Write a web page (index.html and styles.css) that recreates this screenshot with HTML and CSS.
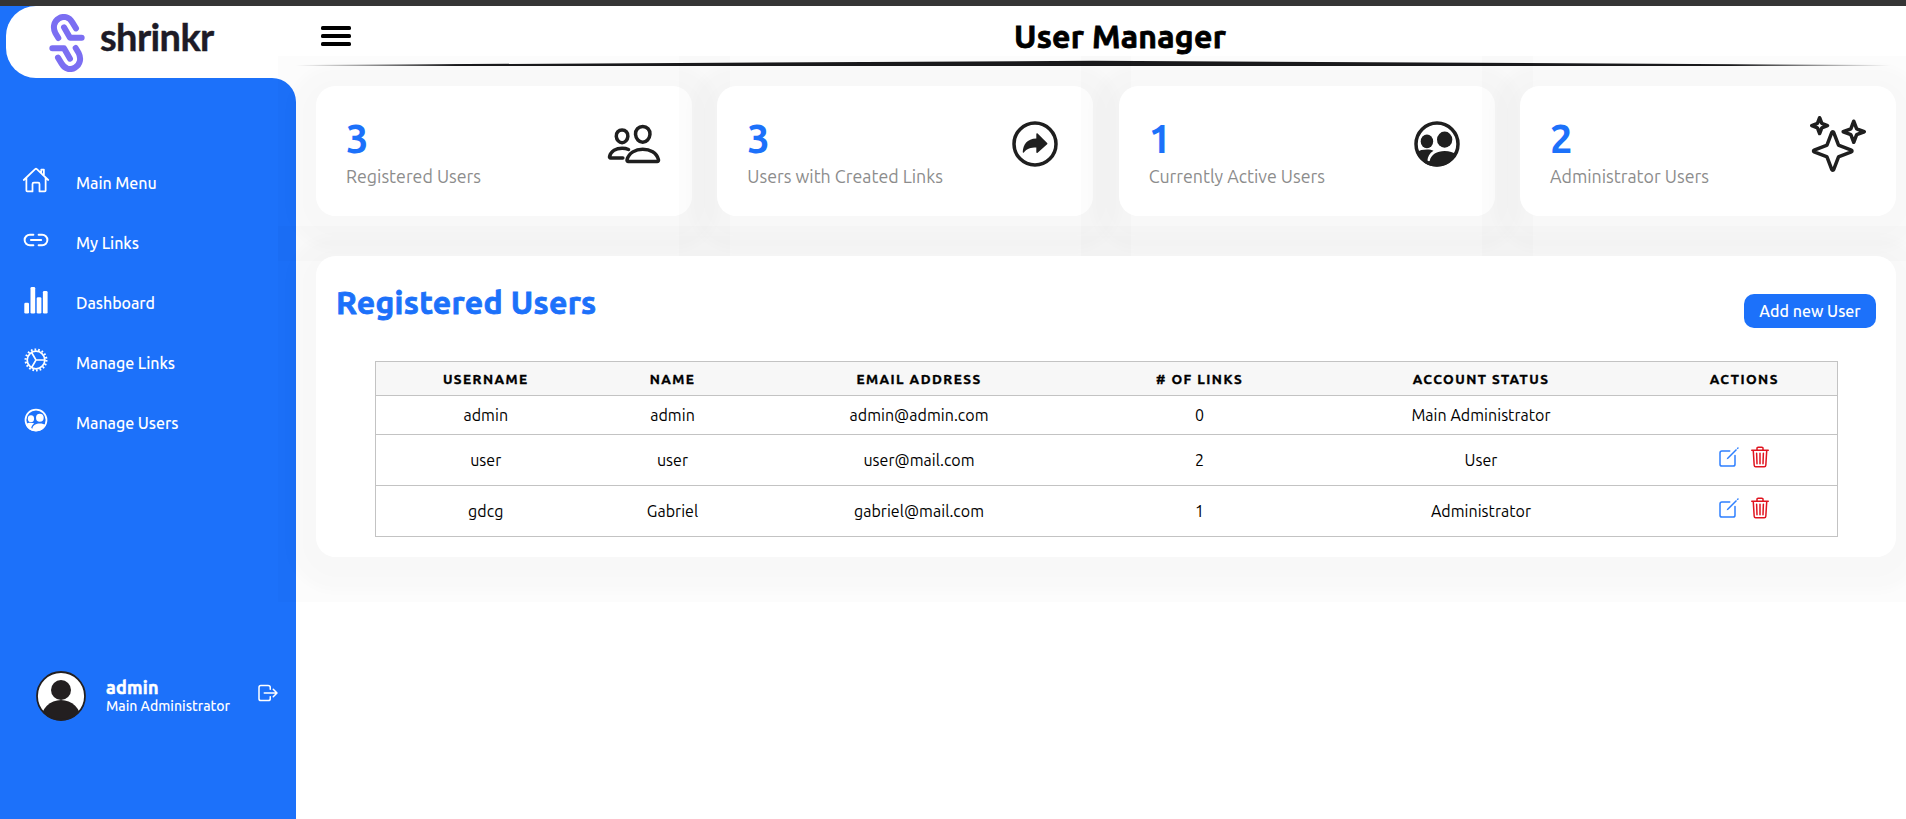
FILE: index.html
```html
<!DOCTYPE html>
<html lang="en">
<head>
<meta charset="utf-8">
<title>User Manager</title>
<link rel="stylesheet" href="styles.css">
</head>
<body>
<svg class="sprite" width="0" height="0" aria-hidden="true">
  <symbol id="people-circle" viewBox="0 0 512 512">
    <circle cx="256" cy="256" r="192" fill="none" stroke="currentColor" stroke-width="32"/>
    <ellipse cx="164" cy="232" rx="57" ry="62" fill="currentColor"/>
    <ellipse cx="326" cy="216" rx="70" ry="74" fill="currentColor"/>
    <path fill="currentColor" d="M72 330C92 312 130 306 165 306C190 306 208 310 224 318C186 342 172 372 168 408C174 418 184 418 190 410C200 352 256 320 326 320C370 320 405 332 434 350A202 202 0 0 1 72 350z"/>
  </symbol>
  <symbol id="create" viewBox="0 0 512 512">
    <path fill="none" stroke="currentColor" stroke-width="32" stroke-linecap="round" stroke-linejoin="round" d="M384 224v184a40 40 0 01-40 40H104a40 40 0 01-40-40V168a40 40 0 0140-40h167.48"/>
    <path fill="currentColor" d="M459.94 53.25a16.06 16.06 0 00-23.22-.56L424.35 65a8 8 0 000 11.31l11.34 11.32a8 8 0 0011.34 0l12.06-12c6.1-6.09 6.67-16.01.85-22.38zM399.34 90L218.82 270.2a9 9 0 00-2.31 3.93L208.16 299a3.91 3.91 0 004.86 4.86l24.85-8.35a9 9 0 003.93-2.31L422 112.66a9 9 0 000-12.66l-9.95-10a9 9 0 00-12.71 0z"/>
  </symbol>
  <symbol id="trash" viewBox="0 0 512 512">
    <path fill="none" stroke="currentColor" stroke-width="32" stroke-linecap="round" stroke-linejoin="round" d="M112 112l20 320c.95 18.49 14.4 32 32 32h184c17.67 0 30.87-13.51 32-32l20-320M80 112h352M192 112V72a23.93 23.93 0 0124-24h80a23.93 23.93 0 0124 24v40M256 176v224M184 176l8 224M328 176l-8 224"/>
  </symbol>
</svg>

<div class="topline"></div>
<div class="app">
  <aside class="sidebar">
    <div class="brand-wrap">
      <div class="brand">
        <svg class="brand-mark" viewBox="147 43 108 174" fill="none" stroke="#7b6ef2" stroke-width="18" stroke-linecap="round" stroke-linejoin="round">
          <path d="M228 86L217 68C207 51 190 48 177 56C161 65 158 84 166 100L175 115M192 83L210 114H245"/>
          <path d="M174 174L185 192C195 209 212 212 225 204C241 195 244 176 236 160L227 145M210 177L192 146H157"/>
        </svg>
        <span class="brand-name">shrinkr</span>
      </div>
    </div>
    <div class="side-body">
      <nav class="menu">
        <a class="menu-item">
          <svg class="menu-icon" viewBox="0 0 512 512" fill="none" stroke="currentColor" stroke-width="32" stroke-linecap="round" stroke-linejoin="round"><path d="M80 212v236a16 16 0 0016 16h96V328a24 24 0 0124-24h80a24 24 0 0124 24v136h96a16 16 0 0016-16V212M480 256L266.89 52c-5-5.28-16.69-5.34-21.78 0L32 256M400 179V64h-48v69"/></svg>
          <span>Main Menu</span>
        </a>
        <a class="menu-item">
          <svg class="menu-icon" viewBox="0 0 512 512" fill="none" stroke="currentColor" stroke-width="36" stroke-linecap="round" stroke-linejoin="round"><path d="M208 352h-64a96 96 0 010-192h64M304 160h64a96 96 0 010 192h-64M163.29 256h187.42"/></svg>
          <span>My Links</span>
        </a>
        <a class="menu-item">
          <svg class="menu-icon" viewBox="0 0 28 28" fill="currentColor"><rect x="2.3" y="16.7" width="4.7" height="10.8" rx="1.3"/><rect x="8.5" y="1" width="4.7" height="26.5" rx="1.3"/><rect x="14.7" y="11.3" width="4.7" height="16.2" rx="1.3"/><rect x="20.9" y="5" width="4.7" height="22.5" rx="1.3"/></svg>
          <span>Dashboard</span>
        </a>
        <a class="menu-item">
          <svg class="menu-icon" viewBox="0 0 28 28" fill="none" stroke="currentColor"><circle cx="14" cy="14" r="8.8" stroke-width="1.7"/><circle cx="14" cy="14" r="10.4" stroke-width="2.2" stroke-dasharray="1.7 1.93"/><path stroke-width="1.6" stroke-linecap="round" stroke-linejoin="round" d="M9.6 6.5L14 14L9.6 21.5M14 14H22.8"/></svg>
          <span>Manage Links</span>
        </a>
        <a class="menu-item">
          <svg class="menu-icon"><use href="#people-circle"/></svg>
          <span>Manage Users</span>
        </a>
      </nav>
      <div class="profile">
        <svg class="avatar" viewBox="0 0 50 50">
          <defs><clipPath id="disc"><circle cx="25" cy="25" r="24.5"/></clipPath></defs>
          <circle cx="25" cy="25" r="24.2" fill="#fff"/>
          <g clip-path="url(#disc)" fill="#231f20"><circle cx="25" cy="19" r="10"/><ellipse cx="25" cy="49" rx="20" ry="20"/></g>
          <circle cx="25" cy="25" r="24" fill="none" stroke="#231f20" stroke-width="1.8"/>
        </svg>
        <div class="who"><strong>admin</strong><span>Main Administrator</span></div>
        <svg class="logout" viewBox="0 0 512 512" fill="none" stroke="currentColor" stroke-width="32" stroke-linecap="round" stroke-linejoin="round"><path d="M304 336v40a40 40 0 01-40 40H104a40 40 0 01-40-40V136a40 40 0 0140-40h152c22.09 0 48 17.91 48 40v40M368 336l80-80-80-80M176 256h256"/></svg>
      </div>
    </div>
  </aside>

  <main class="main">
    <header class="header">
      <svg class="burger" viewBox="0 0 30 20"><rect y="0" width="30" height="4" rx="1.6"/><rect y="8" width="30" height="4" rx="1.6"/><rect y="16" width="30" height="4" rx="1.6"/></svg>
      <h1 class="title">User Manager</h1>
    </header>
    <svg class="rule" viewBox="0 0 1600 6" preserveAspectRatio="none">
      <defs><linearGradient id="fade"><stop offset="0" stop-color="#1c1c1e" stop-opacity="0"/><stop offset=".1" stop-color="#1c1c1e"/><stop offset=".9" stop-color="#1c1c1e"/><stop offset="1" stop-color="#1c1c1e" stop-opacity="0"/></linearGradient></defs>
      <path fill="url(#fade)" d="M0 5L800 .8L1600 5V6H0z"/>
    </svg>

    <section class="cards">
      <div class="lift"><article class="card">
        <div><div class="count">3</div><div class="label">Registered Users</div></div>
        <svg class="card-icon" viewBox="0 0 512 512" fill="none" stroke="currentColor" stroke-width="32" stroke-linecap="round" stroke-linejoin="round"><path d="M402 168c-2.93 40.67-33.1 72-66 72s-63.12-31.32-66-72c-3-42.31 26.37-72 66-72s69 30.46 66 72zM336 304c-65.17 0-127.84 32.37-143.54 95.41-2.08 8.34 3.15 16.59 11.72 16.59h263.65c8.57 0 13.77-8.25 11.72-16.59C463.85 335.36 401.18 304 336 304zM200 185.94c-2.34 32.48-26.72 58.06-53 58.06s-50.7-25.57-53-58.06C91.61 152.15 115.34 128 147 128s55.39 24.77 53 57.94zM206 306c-18.05-8.27-37.93-11.45-59-11.45-52 0-102.1 25.85-114.65 76.2-1.65 6.66 2.53 13.25 9.37 13.25H154"/></svg>
      </article></div>
      <div class="lift"><article class="card">
        <div><div class="count">3</div><div class="label">Users with Created Links</div></div>
        <svg class="card-icon" viewBox="0 0 512 512"><circle cx="256" cy="256" r="192" fill="none" stroke="currentColor" stroke-width="32"/><path fill="currentColor" d="M268 166v40c-86 2-120 56-124 124 0 8 6 8 10 3 26-34 64-45 114-45v42c0 8 6 10 12 5l87-77c4-4 4-8 0-12l-87-85c-6-5-12-3-12 5z"/></svg>
      </article></div>
      <div class="lift"><article class="card">
        <div><div class="count">1</div><div class="label">Currently Active Users</div></div>
        <svg class="card-icon"><use href="#people-circle"/></svg>
      </article></div>
      <div class="lift"><article class="card">
        <div><div class="count">2</div><div class="label">Administrator Users</div></div>
        <svg class="card-icon" viewBox="0 0 512 512" fill="none" stroke="currentColor" stroke-width="32" stroke-linecap="round" stroke-linejoin="round"><path d="M259.92 262.91L216.4 149.77a9 9 0 00-16.8 0l-43.52 113.14a9 9 0 01-5.17 5.17L37.77 311.6a9 9 0 000 16.8l113.14 43.52a9 9 0 015.17 5.17l43.52 113.14a9 9 0 0016.8 0l43.52-113.14a9 9 0 015.17-5.17l113.14-43.52a9 9 0 000-16.8l-113.14-43.52a9 9 0 01-5.17-5.17zM108 68L88 16 68 68 16 88l52 20 20 52 20-52 52-20-52-20zM426.67 117.33L400 48l-26.67 69.33L304 144l69.33 26.67L400 240l26.67-69.33L496 144l-69.33-26.67z"/></svg>
      </article></div>
    </section>

    <div class="lift panel-lift"><section class="panel">
      <div class="panel-head">
        <h2>Registered Users</h2>
        <button class="add">Add new User</button>
      </div>
      <table class="users">
        <colgroup><col class="c1"><col class="c2"><col class="c3"><col class="c4"><col class="c5"><col class="c6"></colgroup>
        <thead><tr><th>Username</th><th>Name</th><th>Email Address</th><th># of Links</th><th>Account Status</th><th>Actions</th></tr></thead>
        <tbody>
          <tr class="short"><td>admin</td><td>admin</td><td>admin@admin.com</td><td>0</td><td>Main Administrator</td><td></td></tr>
          <tr><td>user</td><td>user</td><td>user@mail.com</td><td>2</td><td>User</td><td><div class="actions"><svg class="edit"><use href="#create"/></svg><svg class="del"><use href="#trash"/></svg></div></td></tr>
          <tr><td>gdcg</td><td>Gabriel</td><td>gabriel@mail.com</td><td>1</td><td>Administrator</td><td><div class="actions"><svg class="edit"><use href="#create"/></svg><svg class="del"><use href="#trash"/></svg></div></td></tr>
        </tbody>
      </table>
    </section></div>
  </main>
</div>
</body>
</html>
```
FILE: styles.css
```css
:root {
  --blue: #1c71fa;
  --ink: #1f1f1f;
}
* { box-sizing: border-box; margin: 0; padding: 0; }
body {
  height: 819px;
  overflow: hidden;
  background: #fff;
  color: #000;
  font-family: Ubuntu, "Noto Sans", sans-serif;
}
svg { display: block; flex: none; }
.sprite { display: none; }
.topline { height: 5.5px; background: #353535; }
.app { display: flex; height: 813.5px; }

/* Sidebar */
.sidebar { width: 296px; flex: none; display: flex; flex-direction: column; }
.brand-wrap { height: 72.5px; background: linear-gradient(to right, var(--blue) 50px, #fff 50px); padding-left: 6px; }
.brand { height: 72.5px; background: #fff; border-radius: 30px 0 0 30px; display: flex; align-items: center; padding-left: 43px; }
.brand-mark { width: 36px; height: 58px; margin-top: 2px; }
.brand-name { font-family: Lato, sans-serif; font-weight: 700; font-size: 38px; line-height: 40px; letter-spacing: -.6px; margin: -11px 0 0 15px; color: #1d1b27; -webkit-text-stroke: .4px; }
.side-body { flex: 1; background: var(--blue); border-top-right-radius: 24px; color: #fff; padding-top: 72px; display: flex; flex-direction: column; }
.menu-item { display: flex; height: 60px; align-items: center; padding-left: 22px; }
.menu-icon { width: 28px; height: 28px; }
.menu-item span { font-size: 16px; font-weight: 500; line-height: 20px; margin: 5px 0 0 26px; white-space: nowrap; letter-spacing: -.05px; }
.profile { display: flex; margin-top: 221px; padding-left: 36px; }
.avatar { width: 50px; height: 50px; }
.who { width: 150px; margin-left: 20px; padding-top: 6px; display: flex; flex-direction: column; white-space: nowrap; }
.who strong { font-size: 18px; line-height: 20px; font-weight: 700; letter-spacing: .2px; -webkit-text-stroke: .5px; }
.who span { font-size: 14px; line-height: 18px; font-weight: 500; }
.logout { width: 24px; height: 24px; margin: 10px 0 0 0; }

/* Main column */
.main { flex: 1; min-width: 0; }
.header { height: 55.5px; display: grid; grid-template-columns: 30px 1fr; align-items: start; padding: 20px 17px 0 25px; }
.burger { width: 30px; height: 20px; margin-top: .5px; }
.title { text-align: center; font-size: 32px; line-height: 40px; font-weight: 700; letter-spacing: .25px; margin-top: -10px; -webkit-text-stroke: .8px; }
.rule { width: 1594px; height: 6px; margin: -1px 0 0 0; }
.cards { display: grid; grid-template-columns: repeat(4, 1fr); gap: 25.3px; padding: 20px 10px 0 20px; }

/* Wide, flat halo behind each raised surface */
.lift { position: relative; isolation: isolate; border-radius: 20px; box-shadow: 0 7px 12px 27px rgba(0, 0, 0, .014); }
.lift::before { content: ""; position: absolute; z-index: -1; inset: -30px -38px -45px; background: rgba(0, 0, 0, .01); }
.card { height: 130px; padding: 30px; display: flex; justify-content: space-between; background: #fff; border-radius: 20px; }
.count { color: var(--blue); font-size: 40px; line-height: 46px; font-weight: 600; }
.label { color: #8c8c8c; font-size: 17.8px; line-height: 24px; margin-top: 2px; white-space: nowrap; }
.card-icon { width: 56px; height: 56px; color: var(--ink); }

.panel-lift { margin: 40px 10px 0 20px; }
.panel { height: 301px; padding: 20px; background: #fff; border-radius: 20px; }
.panel-head { display: flex; justify-content: space-between; height: 85px; }
.panel-head h2 { color: var(--blue); font-size: 32px; line-height: 52px; font-weight: 700; letter-spacing: .3px; -webkit-text-stroke: .8px; }
.add { width: 132px; height: 34px; margin-top: 18px; border: 0; border-radius: 10px; background: var(--blue); color: #fff; font: 500 16px/34px Ubuntu, "Noto Sans", sans-serif; white-space: nowrap; }
.users { width: 1463px; margin-left: 39px; table-layout: fixed; border-collapse: collapse; text-align: center; border: 1px solid #c3c3c3; }
.users tr { height: 51px; border-bottom: 1px solid #c3c3c3; }
.users thead tr { height: 34px; background: #f7f7f7; }
.users .short { height: 39px; }
.users th { font-size: 13.6px; line-height: 20px; font-weight: 700; letter-spacing: 1.45px; text-transform: uppercase; -webkit-text-stroke: .35px; }
.users td { font-size: 16px; line-height: 20px; letter-spacing: .04px; }
.users { width: 1462px; }
.c1 { width: 220px; } .c2 { width: 154px; } .c3 { width: 339px; } .c4 { width: 222px; } .c5 { width: 341px; } .c6 { width: 186px; }
.actions { display: flex; justify-content: center; gap: 6.5px; padding: 0 0 6px 0; }
.edit, .del { width: 24px; height: 24px; }
.edit { color: #2f80ff; }
.del { color: #e0141f; }
```
